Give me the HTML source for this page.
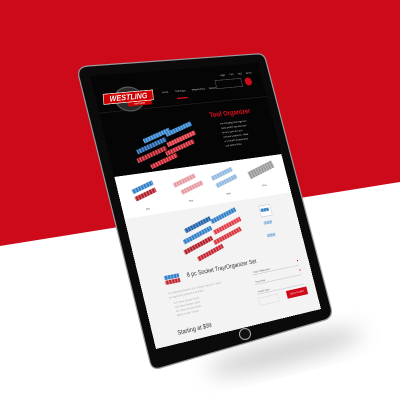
<!DOCTYPE html>
<html><head><meta charset="utf-8"><style>
html,body{margin:0;padding:0;width:400px;height:400px;overflow:hidden;background:#fff;font-family:"Liberation Sans",sans-serif}
#bg{position:absolute;left:0;top:0}
#scr{position:absolute;left:0;top:0;width:300px;height:400px;transform-origin:0 0;
transform:matrix3d(0.65127,-0.021047,0,0.00035377,0.15629,0.66301,0,-0.00005585,0,0,1,0,90,76,0,1);background:#f3f3f3;overflow:hidden}
.a{position:absolute}
.tx{position:absolute;font-size:4px;color:#ccc;white-space:nowrap}
.tray{position:absolute;height:7px;border-radius:1px;background-image:repeating-linear-gradient(90deg,rgba(255,255,255,0.35) 0 2px,transparent 2px 5px)}
</style></head><body>
<svg id="bg" width="400" height="400" viewBox="0 0 400 400">
<defs><filter id="b" x="-50%" y="-50%" width="200%" height="200%"><feGaussianBlur stdDeviation="10"/></filter></defs>
<polygon points="0,0 400,0 400,182 0,246" fill="#cc0a1a"/>
<ellipse cx="285" cy="352" rx="80" ry="12" fill="#888" opacity="0.4" filter="url(#b)" transform="rotate(-14 285 352)"/>
<path d="M88,66 L256,54 Q264,53 266,61 L331,308 Q333,317 325,320 L160,368 Q152,370 150,362 L79,77 Q77,67 88,66 Z" fill="#0b0b0b" stroke="#9a9a9a" stroke-width="1.2"/>
<circle cx="245" cy="334" r="5.5" fill="#111" stroke="#aaa" stroke-width="1"/>
<circle cx="172" cy="70" r="0.8" fill="#333"/>
</svg>
<div id="scr">
 <div class="a" style="left:0;top:0;width:300px;height:150px;background:#050505"></div>
 <div class="a" style="left:0;top:55px;width:300px;height:1px;background:#222"></div>
 <div class="tx" style="left:222px;top:12px">Login</div><div class="tx" style="left:240px;top:12px">Cart</div><div class="tx" style="left:256px;top:12px">FAQ</div><div class="tx" style="left:272px;top:12px">BLOG</div>
 <div class="a" style="left:210px;top:22px;width:48px;height:12px;border:1px solid #555"></div>
 <div class="a" style="left:266px;top:22px;width:13px;height:13px;border-radius:50%;background:#d10a1a"></div>
 <div class="a" style="left:30px;top:20px;width:45px;height:34px;border-radius:50%;background:#2a2a2a;border:2px solid #555"></div>
 <div class="a" style="left:12px;top:28px;width:82px;height:14px;background:#c00;border:1.5px solid #fff;transform:skewX(-10deg);color:#fff;font-weight:bold;font-size:12px;line-height:14px;text-align:center;font-style:italic">WESTLING</div>
 <div class="a" style="left:50px;top:44px;width:40px;height:6px;background:#c00;color:#fff;font-size:4px;text-align:center;line-height:6px">MACHINE</div>
 <div class="tx" style="left:112px;top:31px;color:#ddd">Home</div>
 <div class="tx" style="left:135px;top:31px;color:#ddd">Tool Trays</div>
 <div class="tx" style="left:165px;top:31px;color:#ddd">Wrench Rack</div>
 <div class="tx" style="left:196px;top:31px;color:#ddd">Dealers</div>
 <div class="a" style="left:135px;top:44px;width:20px;height:2px;background:#d10a1a"></div>
 <div class="a" style="left:185px;top:70px;color:#e0101e;font-weight:bold;font-size:11px;white-space:nowrap">Tool Organizer</div>
 <div class="tx" style="left:200px;top:88px">The Westling Tool Organizer</div>
 <div class="tx" style="left:200px;top:95px">holds socket sets and tools</div>
 <div class="tx" style="left:200px;top:102px">for any sized tool box,</div>
 <div class="tx" style="left:200px;top:109px">cart and workbench. Made</div>
 <div class="tx" style="left:200px;top:116px">in USA with durable steel</div>
 <div class="tx" style="left:200px;top:123px">and quality finish.</div>
 <div class="tray" style="left:60px;top:94px;width:50px;background-color:#2f7fc8;transform:rotate(-15deg)"></div>
 <div class="tray" style="left:100px;top:88px;width:50px;background-color:#2f7fc8;transform:rotate(-15deg)"></div>
 <div class="tray" style="left:45px;top:108px;width:55px;background-color:#1e5fa8;transform:rotate(-15deg)"></div>
 <div class="tray" style="left:98px;top:103px;width:55px;background-color:#d8323c;transform:rotate(-15deg)"></div>
 <div class="tray" style="left:42px;top:121px;width:55px;background-color:#b01c26;transform:rotate(-15deg)"></div>
 <div class="tray" style="left:92px;top:116px;width:55px;background-color:#c42430;transform:rotate(-15deg)"></div>
 <div class="tray" style="left:62px;top:133px;width:50px;background-color:#c8202c;transform:rotate(-15deg)"></div>
 <div class="a" style="left:0;top:150px;width:300px;height:62px;background:#fff"></div>
 <div class="tray" style="left:22px;top:167px;width:38px;background-color:#2f7fc8;transform:rotate(-15deg)"></div>
 <div class="tray" style="left:24px;top:178px;width:38px;background-color:#b01c26;transform:rotate(-15deg)"></div>
 <div class="tray" style="left:92px;top:166px;width:42px;background-color:#e59aa0;transform:rotate(-15deg)"></div>
 <div class="tray" style="left:102px;top:178px;width:42px;background-color:#e59aa0;transform:rotate(-15deg)"></div>
 <div class="tray" style="left:160px;top:164px;width:42px;background-color:#8fb8de;transform:rotate(-15deg)"></div>
 <div class="tray" style="left:165px;top:176px;width:42px;background-color:#8fb8de;transform:rotate(-15deg)"></div>
 <div class="tray" style="left:228px;top:164px;width:52px;height:12px;background-color:#999;transform:rotate(-15deg)"></div>
 <div class="tx" style="left:38px;top:200px;color:#555">Mix</div><div class="tx" style="left:112px;top:198px;color:#555">Red</div><div class="tx" style="left:180px;top:196px;color:#555">Blue</div><div class="tx" style="left:248px;top:192px;color:#555">Silver</div>
 <div class="tray" style="left:92px;top:234px;width:50px;background-color:#1e5fa8;transform:rotate(-15deg)"></div>
 <div class="tray" style="left:140px;top:227px;width:50px;background-color:#2f7fc8;transform:rotate(-15deg)"></div>
 <div class="tray" style="left:85px;top:249px;width:55px;background-color:#2f7fc8;transform:rotate(-15deg)"></div>
 <div class="tray" style="left:140px;top:243px;width:55px;background-color:#e03a44;transform:rotate(-15deg)"></div>
 <div class="tray" style="left:82px;top:264px;width:55px;background-color:#b01c26;transform:rotate(-15deg)"></div>
 <div class="tray" style="left:136px;top:258px;width:55px;background-color:#d8323c;transform:rotate(-15deg)"></div>
 <div class="tray" style="left:102px;top:278px;width:50px;background-color:#c42430;transform:rotate(-15deg)"></div>
 <div class="a" style="left:232px;top:225px;width:20px;height:16px;border:1px solid #ccc;background:#fff"></div>
 <div class="tray" style="left:234px;top:230px;width:16px;height:5px;background-color:#2f7fc8"></div>
 <div class="tray" style="left:234px;top:250px;width:16px;height:5px;background-color:#8fb8de"></div>
 <div class="tray" style="left:234px;top:270px;width:16px;height:5px;background-color:#8fb8de"></div>
 <div class="tray" style="left:40px;top:302px;width:25px;height:6px;background-color:#2f7fc8"></div>
 <div class="tray" style="left:40px;top:309px;width:25px;height:6px;background-color:#c42430"></div>
 <div class="a" style="left:78px;top:302px;font-size:9px;color:#333;white-space:nowrap">8 pc Socket Tray/Organizer Set</div>
 <div class="tx" style="left:40px;top:325px;color:#aaa">The Westling Machine 8 pc Socket Tray Set is ideal</div>
 <div class="tx" style="left:40px;top:331px;color:#aaa">for organizing sockets of all sizes.</div>
 <div class="tx" style="left:46px;top:340px;color:#aaa">1/4" Drive Socket Holder</div>
 <div class="tx" style="left:46px;top:346px;color:#aaa">3/8" Drive Socket Holder</div>
 <div class="tx" style="left:46px;top:352px;color:#aaa">1/2" Drive Socket Holder</div>
 <div class="tx" style="left:46px;top:358px;color:#aaa">Metric Socket Holder</div>
 <div class="a" style="left:190px;top:316px;width:90px;height:10px;border-bottom:1px solid #ccc"></div><div class="tx" style="left:192px;top:320px;color:#666">Tray Configuration</div>
 <div class="a" style="left:190px;top:331px;width:90px;height:10px;border-bottom:1px solid #ccc"></div><div class="tx" style="left:192px;top:335px;color:#666">Tray Color</div>
 <div class="a" style="left:190px;top:346px;width:90px;height:10px;border-bottom:1px solid #ccc"></div><div class="tx" style="left:192px;top:350px;color:#666">Socket Type</div>
 <div class="a" style="left:278px;top:318px;width:2px;height:2px;background:#d10a1a"></div>
 <div class="a" style="left:278px;top:333px;width:2px;height:2px;background:#d10a1a"></div>
 <div class="a" style="left:190px;top:362px;width:35px;height:10px;border:1px solid #ddd"></div>
 <div class="a" style="left:243px;top:361px;width:40px;height:12px;background:#d10a1a;color:#fff;font-size:4px;line-height:12px;text-align:center">ADD TO CART</div>
 <div class="a" style="left:40px;top:380px;font-size:9px;color:#333;white-space:nowrap">Starting at $99</div>
</div>
</body></html>
